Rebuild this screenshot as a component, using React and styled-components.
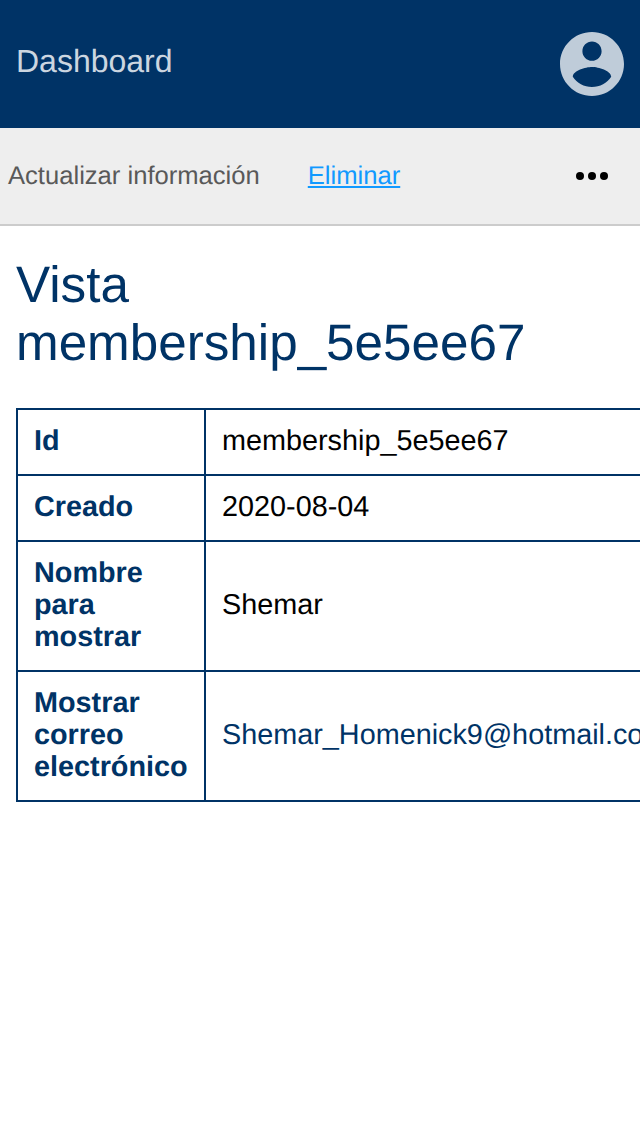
import React from "react";
import styled, { createGlobalStyle } from "styled-components";

const GlobalStyle = createGlobalStyle`
  * { box-sizing: border-box; }
  html, body { margin: 0; background: #fff; }
  body {
    font-family: "Liberation Sans", Arial, sans-serif;
    color: #000;
    overflow: hidden;
    text-rendering: geometricPrecision;
  }
`;

const Page = styled.div`
  width: 100%;
  height: 1136px;
  overflow: hidden;
`;

const Header = styled.header`
  display: flex;
  align-items: center;
  justify-content: space-between;
  height: 128px;
  padding: 0 16px;
  background: #003366;
  color: #bfccd9;
`;

const Brand = styled.a`
  font-size: 32px;
  line-height: 36px;
  padding-bottom: 6px;
  color: #ccd6e0;
`;

const AccountButton = styled.button`
  display: flex;
  padding: 0;
  border: 0;
  background: none;
  color: inherit;
`;

const Toolbar = styled.nav`
  display: flex;
  align-items: center;
  height: 98px;
  padding: 0 32px 0 8px;
  background: #eeeeee;
  border-bottom: 2px solid #cccccc;
`;

const Action = styled.a`
  margin-right: 48px;
  font-size: 25.6px;
  line-height: 30px;
  color: ${(p) => (p.$link ? "#1199ff" : "#595959")};
  text-decoration: ${(p) => (p.$link ? "underline 2px" : "none")};
  text-underline-offset: 2px;
`;

const MoreButton = styled.button`
  display: flex;
  margin-left: auto;
  padding: 0;
  border: 0;
  background: none;
`;

const Content = styled.main`
  padding: 30px 16px 0;
`;

const Title = styled.h1`
  margin: 0 0 36px;
  font-size: 51.2px;
  line-height: 58px;
  font-weight: 400;
  color: #003366;
`;

const Details = styled.table`
  width: 700px;
  table-layout: fixed;
  border-collapse: collapse;
  font-size: 28.8px;
  line-height: 32px;
`;

const Label = styled.th`
  width: 188px;
  padding: 15px 16px 17px;
  border: 2px solid #003366;
  text-align: left;
  color: #003366;
`;

const Value = styled.td`
  padding: 15px 16px 17px;
  border: 2px solid #003366;
  white-space: nowrap;
  color: ${(p) => (p.$link ? "#003366" : "#000")};
`;

const rows = [
  { label: "Id", value: "membership_5e5ee67" },
  { label: "Creado", value: "2020-08-04" },
  { label: "Nombre para mostrar", value: "Shemar" },
  { label: "Mostrar correo electrónico", value: "Shemar_Homenick9@hotmail.com", link: true },
];

export default function App() {
  return (
    <Page>
      <GlobalStyle />
      <Header>
        <Brand>Dashboard</Brand>
        <AccountButton aria-label="Cuenta">
          <svg width="64" height="64" viewBox="2 2 20 20" fill="currentColor">
            <path d="M12 2C6.48 2 2 6.48 2 12s4.48 10 10 10 10-4.48 10-10S17.52 2 12 2zm0 3c1.66 0 3 1.34 3 3s-1.34 3-3 3-3-1.34-3-3 1.34-3 3-3zm0 14.2c-2.5 0-4.71-1.28-6-3.22.03-1.99 4-3.08 6-3.08 1.99 0 5.97 1.09 6 3.08-1.29 1.94-3.5 3.22-6 3.22z" />
          </svg>
        </AccountButton>
      </Header>
      <Toolbar>
        <Action>Actualizar información</Action>
        <Action $link>Eliminar</Action>
        <MoreButton aria-label="Más">
          <svg width="32" height="8" viewBox="0 0 32 8">
            <circle cx="4" cy="4" r="4" />
            <circle cx="16" cy="4" r="4" />
            <circle cx="28" cy="4" r="4" />
          </svg>
        </MoreButton>
      </Toolbar>
      <Content>
        <Title>Vista<br />membership_5e5ee67</Title>
        <Details>
          <tbody>
            {rows.map((r) => (
              <tr key={r.label}>
                <Label>{r.label}</Label>
                <Value $link={r.link}>{r.value}</Value>
              </tr>
            ))}
          </tbody>
        </Details>
      </Content>
    </Page>
  );
}
